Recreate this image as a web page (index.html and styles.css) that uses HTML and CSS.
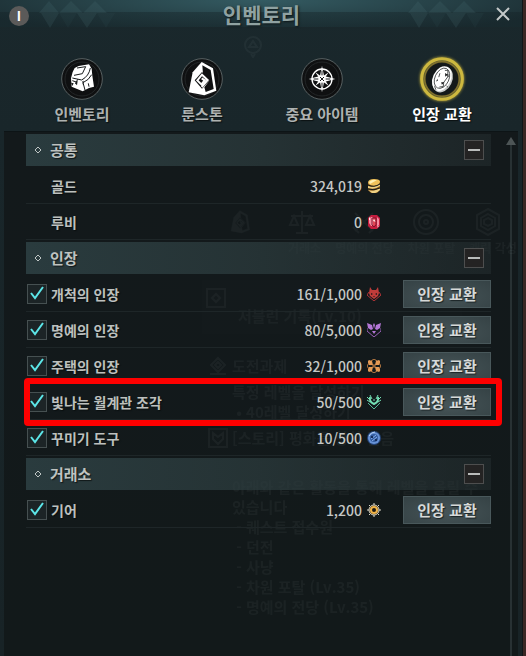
FILE: index.html
```html
<!DOCTYPE html>
<html lang="ko">
<head>
<meta charset="utf-8">
<meta name="viewport" content="width=device-width, initial-scale=1">
<title>인벤토리</title>
<link rel="stylesheet" href="styles.css">
</head>
<body>
<svg class="sprites" aria-hidden="true">
  <symbol id="check" viewBox="0 0 20 20"><path d="M4 9 L8 14 L16 3"/></symbol>
  <symbol id="rune" viewBox="0 0 126 126">
    <path fill="currentColor" d="M62 12 L96 31 L106 98 L70 112 L23 103 L35 43Z"/>
    <path fill="#101112" d="M64 22 L89 36 L98 93 L74 102 L70 88 L85 68 L66 48Z"/>
    <path fill="#101112" d="M63 42 L87 66 L63 92 L41 67Z"/>
    <path fill="none" stroke="currentColor" stroke-width="6" d="M62 87 L80 66 L63 50 L49 67 L61 79 L71 67 L62 61"/>
  </symbol>
</svg>

<div class="window">
  <div class="behind" aria-hidden="true">
    <svg class="ghost-pin" viewBox="0 0 20 22"><circle cx="10" cy="9" r="8"/><path d="M6 11l4-6 4 6zM8 18l2 3 2-3"/></svg>
    <div class="ghost-icons">
      <svg viewBox="0 0 126 126"><use href="#rune"/></svg>
      <svg viewBox="0 0 28 28"><path d="M14 3v22M8 25h12M3 8h22M6 8l-4 9h8zM22 8l-4 9h8z"/></svg>
      <svg viewBox="0 0 28 28"><path d="M5 5l18 18M23 5L5 23M3 19l6 6M19 25l6-6"/></svg>
      <svg viewBox="0 0 28 28"><circle cx="14" cy="14" r="12"/><circle cx="14" cy="14" r="7"/><circle cx="14" cy="14" r="2"/></svg>
      <svg viewBox="0 0 28 28"><path d="M14 1l11 6v14l-11 6-11-6V7zM14 6l7 4v8l-7 4-7-4v-8zM14 10l4 2v4l-4 2-4-2v-4z"/></svg>
    </div>
    <p class="ghost-caption"><span>거래소</span><span>명예의 전당</span><span>차원 포탈</span><span>캐릭 각성</span></p>
    <div class="ghost-card"><svg viewBox="0 0 20 20"><path d="M1 1h18v18H1zM10 6l4 4-4 4-4-4z"/></svg><p>저블린 기록(Lv.10)</p></div>
    <p class="ghost-head"><svg viewBox="0 0 20 20"><path d="M10 2l7 7-7 7-7-7zM2 18h16M10 6l3 3-3 3-3-3z"/></svg>도전과제</p>
    <p class="ghost-line">특정 레벨을 달성하기<br>&nbsp;• 40레벨 달성하기</p>
    <p class="ghost-head ghost-story"><svg viewBox="0 0 20 20"><path d="M1 1h18v18H1zM5 5l5 4 5-4v6l-5 5-5-5z"/></svg>[스토리] 평화를 향한 걸음</p>
    <p class="ghost-line ghost-text">아래와 같은 활동을 통해 레벨을 올릴 수<br>있습니다<br>&nbsp;- 퀘스트 접수원<br>&nbsp;- 던전<br>&nbsp;- 사냥<br>&nbsp;- 차원 포탈 (Lv.35)<br>&nbsp;- 명예의 전당 (Lv.35)</p>
  </div>

  <header class="titlebar">
    <span class="key">I</span>
    <svg class="facets" viewBox="0 0 76 27" aria-hidden="true"><path d="M0 12L10 0 20 12zM20 12L32 0 44 12zM44 12L56 0 68 12z"/><path d="M2 12h18l-9 15zM38 12h20l-10 15z"/><path class="dim" d="M20 12h18l-9 15zM58 12h18l-9 15z"/></svg>
    <h1>인벤토리</h1>
    <svg class="facets" viewBox="0 0 76 27" aria-hidden="true"><path d="M0 12L10 0 20 12zM20 12L32 0 44 12zM44 12L56 0 68 12z"/><path d="M2 12h18l-9 15zM38 12h20l-10 15z"/><path class="dim" d="M20 12h18l-9 15zM58 12h18l-9 15z"/></svg>
    <button class="close" type="button" aria-label="닫기"><svg viewBox="0 0 14 14"><path d="M1 1l12 12M13 1L1 13"/></svg></button>
  </header>

  <nav class="tabs">
    <button class="tab" type="button">
      <svg class="medal" viewBox="0 0 126 126">
        <circle class="disc" cx="63" cy="63" r="61"/><circle class="inner" cx="63" cy="63" r="51"/>
        <path fill="#fff" d="M41 30 L53 24 L84 19 L92 32 L94 53 L99 86 L84 90 L65 100 L32 86 L30 61 L35 42Z"/>
        <path class="ink thin" d="M48 30 L74 26 L64 47 L39 52 M88 30 Q84 54 62 66 L34 60 M92 50 Q84 66 66 74 L72 96 M50 64 L44 76 M34 68 L46 72 M82 76 L84 86"/>
        <path fill="#16191a" d="M30 74l8 2-4 8zM42 76l8-8-2 14zM64 70l4-2-2 14z"/>
      </svg>
      <span>인벤토리</span>
    </button>
    <button class="tab" type="button">
      <svg class="medal" viewBox="0 0 126 126">
        <circle class="disc" cx="63" cy="63" r="61"/><circle class="inner" cx="63" cy="63" r="51"/>
        <use href="#rune" width="126" height="126"/>
      </svg>
      <span>룬스톤</span>
    </button>
    <button class="tab" type="button">
      <svg class="medal" viewBox="0 0 126 126">
        <circle class="disc" cx="63" cy="63" r="61"/><circle class="inner" cx="63" cy="63" r="51"/>
        <circle cx="63" cy="63" r="30" fill="none" stroke="#fff" stroke-width="4"/>
        <path fill="#fff" d="M63 23l6 31 34 9-34 9-6 31-6-31-34-9 34-9z"/>
        <path fill="#fff" d="M43 43l16 11 8 0 16-11-11 16 0 8 11 16-16-11-8 0-16 11 11-16 0-8z"/>
        <path class="ink thin" d="M63 38v14M63 74v14M38 63h14M74 63h14M57 57l12 12M69 57L57 69"/>
      </svg>
      <span>중요 아이템</span>
    </button>
    <button class="tab active" type="button" aria-current="page">
      <svg class="medal" viewBox="0 0 126 126">
        <circle cx="63" cy="63" r="54" fill="#14191a"/>
        <circle class="gold" cx="63" cy="63" r="61"/><circle class="gold-inner" cx="63" cy="63" r="52"/>
        <g transform="rotate(25 63 63)"><ellipse cx="66" cy="64" rx="28" ry="40" fill="#c9cccc"/><ellipse cx="62" cy="62" rx="27" ry="39" fill="#fff"/><ellipse class="ink hair" cx="62" cy="61" rx="21" ry="32"/><path class="ink hair" d="M60 36l8-4 8 18-4 20 4 12-10 6M72 42l6 8M50 50l2 12M84 76l6 2M52 92l8 8"/><path fill="#17191a" d="M64 43l9 1-4 9zM50 68l4 5-4 4zM65 73l9-4-4 10z"/></g>
      </svg>
      <span>인장 교환</span>
    </button>
  </nav>

  <main class="body">
    <div class="list">
      <section>
        <div class="group"><svg class="bullet" viewBox="0 0 8 8"><path d="M4 1l3 3-3 3-3-3z"/></svg><h2>공통</h2><button class="fold" type="button" aria-label="공통 접기"></button></div>
        <ul>
          <li class="row"><span class="name">골드</span><span class="amount">324,019</span>
            <svg class="coin" viewBox="0 0 14 14"><path fill="#8b5a19" d="M1 4l12-2v9l-3 3H4l-3-3z"/><path fill="#f0c25b" d="M1 3Q2 0 7 0t6 2q0 4-6 5Q1 6 1 3z"/><path fill="#fff0b2" d="M5 1h5L3 5 2 3z"/><path fill="#eed083" d="M1 7q6 2 12-2v2q-5 4-12 2zM1 11q6 2 12-2v2q-4 4-8 3z"/><path stroke="#11191b" fill="none" d="M1 6q6 3 12-1M1 10q6 2 12-1"/></svg><span></span></li>
          <li class="row"><span class="name">루비</span><span class="amount">0</span>
            <svg class="coin" viewBox="0 0 14 14"><path fill="#c51c3e" d="M4 0h6l3 3v8l-3 3H4l-3-3V3z"/><path fill="#f58ca1" d="M4 2h2v9H4L2 8V4zM10 2l2 2v6l-2 2z"/><path fill="#e44456" d="M6 3h3v7l-3 1z"/><path fill="#ffe3e4" d="M7 4l2 3-3-1zM2 3l1-1v3H2zM11 11h1l-2 2z"/><path fill="none" stroke="#7e142d" d="M5 3h4v7l-2 2-2-2z"/></svg><span></span></li>
        </ul>
      </section>
      <section>
        <div class="group"><svg class="bullet" viewBox="0 0 8 8"><path d="M4 1l3 3-3 3-3-3z"/></svg><h2>인장</h2><button class="fold" type="button" aria-label="인장 접기"></button></div>
        <ul>
          <li class="row"><label class="name"><input type="checkbox" checked><svg class="tick"><use href="#check"/></svg>개척의 인장</label><span class="amount">161/1,000</span>
            <svg class="coin" viewBox="0 0 14 14"><path fill="#c13c3a" d="M3 0l2 3h4l2-3 1 6-1 3-4 3-4-3-1-3z"/><path fill="none" stroke="#b03436" d="M2 5L0 8l7 6 7-6-2-3"/><path fill="#231719" d="M4 6l2 1-2 1zM10 6L8 7l2 1zM6 9h2l-1 1z"/></svg><button class="trade" type="button">인장 교환</button></li>
          <li class="row"><label class="name"><input type="checkbox" checked><svg class="tick"><use href="#check"/></svg>명예의 인장</label><span class="amount">80/5,000</span>
            <svg class="coin" viewBox="0 0 14 14"><path fill="#b477d6" d="M0 0l5 2 1 4-2 1-3-2zM14 0L9 2 8 6l2 1 3-2zM6 2l1-2 1 2-1 4zM5 8h4l-2 3z"/><path fill="none" stroke="#9960b9" d="M0 5v3l7 6 7-6V5"/></svg><button class="trade" type="button">인장 교환</button></li>
          <li class="row"><label class="name"><input type="checkbox" checked><svg class="tick"><use href="#check"/></svg>주택의 인장</label><span class="amount">32/1,000</span>
            <svg class="coin" viewBox="0 0 14 14"><path fill="#e49a55" d="M1 2l1-1 3 1 1 4-4 0-1-2zM13 2l-1-1-3 1-1 4 4 0 1-2zM1 12l1 1 3-1 1-4-4 0-1 2zM13 12l-1 1-3-1-1-4 4 0 1 2z"/><path fill="none" stroke="#c07f45" d="M4 2l3-2 3 2M12 4l2 3-2 3M10 12l-3 2-3-2M2 10L0 7l2-3M5 7h4M7 5v4"/></svg><button class="trade" type="button">인장 교환</button></li>
          <li class="row marked"><label class="name"><input type="checkbox" checked><svg class="tick"><use href="#check"/></svg>빛나는 월계관 조각</label><span class="amount">50/500</span>
            <svg class="coin" viewBox="0 0 14 14"><path fill="none" stroke="#73dfb4" stroke-width="2" d="M3 2q-1 5 4 7 5-2 4-7"/><path fill="none" stroke="#73dfb4" d="M0 2l3 3M0 5l3 2M3 0l2 4M14 2l-3 3M14 5l-3 2M11 0L9 4M7 4v2"/><path fill="none" stroke="#56b596" d="M1 8l6 6 6-6"/></svg><button class="trade" type="button">인장 교환</button></li>
          <li class="row"><label class="name"><input type="checkbox" checked><svg class="tick"><use href="#check"/></svg>꾸미기 도구</label><span class="amount">10/500</span>
            <svg class="coin" viewBox="0 0 14 14"><circle cx="7" cy="7" r="7" fill="#254579"/><circle cx="7" cy="7" r="6" fill="#6792d6"/><circle cx="7" cy="7" r="4" fill="#335c9e"/><path fill="none" stroke="#b4d0f4" d="M2 5q2-4 6-4"/><path fill="none" stroke="#84aceb" d="M4 8l5-4M5 10l5-4"/><path fill="#17305d" d="M4 5h2v2H4zM8 8h2v2H8z"/></svg><span></span></li>
        </ul>
      </section>
      <section>
        <div class="group"><svg class="bullet" viewBox="0 0 8 8"><path d="M4 1l3 3-3 3-3-3z"/></svg><h2>거래소</h2><button class="fold" type="button" aria-label="거래소 접기"></button></div>
        <ul>
          <li class="row"><label class="name"><input type="checkbox" checked><svg class="tick"><use href="#check"/></svg>기어</label><span class="amount">1,200</span>
            <svg class="coin" viewBox="0 0 14 14"><path stroke="#ddd9ca" d="M7 0v14M0 7h14M2 2l10 10M12 2L2 12"/><circle cx="7" cy="7" r="5" fill="#32291b" stroke="#ddd7c2"/><circle cx="7" cy="7" r="3" fill="#1d1a14" stroke="#efb348" stroke-width="2"/></svg><button class="trade" type="button">인장 교환</button></li>
        </ul>
      </section>
    </div>
    <div class="scroll" aria-hidden="true"></div>
  </main>
</div>
</body>
</html>
```

FILE: styles.css
```css
* { box-sizing: border-box; }

body {
  margin: 0;
  background: #3a2724;
  color: #bdc0be;
  font-family: "Noto Sans CJK KR", sans-serif;
  font-size: 14px;
  line-height: 20px;
  font-weight: 500;
}

h1, h2, p, ul { margin: 0; padding: 0; }
ul { list-style: none; }
button { font: inherit; color: inherit; border: 0; padding: 0; background: none; cursor: pointer; }
svg { display: block; }
.sprites { position: absolute; width: 0; height: 0; }

.window {
  position: relative;
  display: flex;
  flex-direction: column;
  min-height: 100vh;
  margin-right: 3px;
  padding: 0 4px;
  background: linear-gradient(#1a282c, #19262a 130px, #182326);
  border-right: 1px solid #101719;
}

/* Title bar */
.titlebar {
  display: grid;
  grid-template-columns: 30px 76px 1fr 76px 30px;
  align-items: center;
  height: 27px;
  margin: 0 -4px;
  padding: 0 8px 0 9px;
  background:
    linear-gradient(transparent 12px, rgba(20, 34, 38, .4) 12px),
    radial-gradient(ellipse 60% 130% at 50% 0, #345b62, #1c2e33);
}
.titlebar h1 {
  font-size: 21px;
  line-height: 28px;
  font-weight: 700;
  text-align: center;
  color: #8fa2a2;
  text-shadow: 1px 1px 2px #0c1517;
}
.key {
  width: 20px;
  height: 20px;
  margin-top: 3px;
  border-radius: 50%;
  background: #5b5a59;
  color: #fff;
  font-size: 13px;
  font-weight: 700;
  text-align: center;
}
.facets { width: 76px; height: 27px; fill: #5a8489; opacity: .14; }
.facets .dim { opacity: .4; }
.close { justify-self: end; margin-right: 4px; width: 14px; height: 14px; }
.close svg { width: 14px; height: 14px; fill: none; stroke: #c3c8c8; stroke-width: 2; }

/* Tabs */
.tabs {
  display: grid;
  grid-template-columns: repeat(4, 1fr);
  height: 104px;
  padding: 31px 16px 0 18px;
}
.tab {
  display: flex;
  flex-direction: column;
  align-items: center;
  gap: 3px;
  height: 68px;
  font-size: 15px;
  line-height: 22px;
  font-weight: 700;
  color: #aeb2b1;
  text-shadow: 1px 1px 1px #0b1112;
}
.tab.active { color: #fff; }
.medal { width: 42px; height: 42px; overflow: visible; color: #fff; }
.disc { fill: #0f1011; stroke: #586061; stroke-width: 3; }
.inner { fill: none; stroke: #232627; stroke-width: 3; }
.ink { fill: none; stroke: #16191a; stroke-width: 4; }
.ink.thin { stroke-width: 3; }
.ink.hair { stroke-width: 2; }
.gold { fill: none; stroke: #cdb83f; stroke-width: 9; filter: drop-shadow(0 0 5px #cdb83f); }
.gold-inner { fill: none; stroke: #80712e; stroke-width: 5; }

/* Currency list */
.body {
  flex: 1;
  display: flex;
  padding-left: 22px;
  background: rgba(17, 22, 24, .8);
  border-top: 1px solid #0d1416;
}
.list { flex: 1; position: relative; z-index: 2; }
.group {
  display: flex;
  align-items: center;
  height: 32px;
  margin: 2px 0;
  padding: 0 7px 0 8px;
  background: linear-gradient(90deg, rgba(43, 61, 64, .95), rgba(45, 61, 63, .7) 50%, rgba(38, 48, 50, .5));
}
.bullet { width: 8px; height: 8px; margin-right: 8px; fill: none; stroke: #bfc6c5; }
.group h2 {
  flex: 1;
  font-size: 15px;
  font-weight: 700;
  line-height: 20px;
  color: #bec2c0;
  text-shadow: 1px 1px 1px #101718;
}
.fold {
  display: grid;
  place-items: center;
  width: 20px;
  height: 20px;
  background: #242323;
  border: 1px solid #4d4e4e;
}
.fold::before { content: ""; width: 12px; height: 2px; background: #b9bbba; }

.row {
  position: relative;
  display: grid;
  grid-template-columns: 1fr auto 14px 110px;
  align-items: center;
  height: 36px;
  border-bottom: 1px solid #1e2628;
}
.name {
  display: grid;
  grid-template-columns: 20px auto;
  column-gap: 4px;
  align-items: center;
  justify-content: start;
  padding-left: 1px;
  font-weight: 700;
  text-shadow: 1px 1px 1px #0a0f10;
}
span.name::before { content: ""; }
.name input {
  grid-area: 1 / 1;
  appearance: none;
  width: 20px;
  height: 20px;
  margin: 0;
  background: #1c2426;
  border: 1px solid #465051;
}
.tick { grid-area: 1 / 1; width: 20px; height: 20px; fill: none; stroke: #5ce6e8; stroke-width: 2; pointer-events: none; }
.name input:not(:checked) + .tick { visibility: hidden; }
.amount { padding-right: 5px; color: #c5c7c5; }
.coin { width: 14px; height: 14px; }
.row > :last-child { margin-left: 22px; }
.trade {
  height: 28px;
  background: radial-gradient(ellipse at 50% 60%, #465457, #354245);
  border: 1px solid #49585b;
  font-size: 15px;
  line-height: 24px;
  font-weight: 700;
  color: #d6d9d8;
  text-shadow: 1px 1px 1px #1b2426;
}
.marked::after {
  content: "";
  position: absolute;
  inset: -6px -11px -7px -2px;
  border: 6px solid #fe0000;
  border-radius: 4px;
  pointer-events: none;
}

.scroll { display: flex; flex-direction: column; align-items: center; width: 14px; margin: 5px 0 0 13px; }
.scroll::before { content: ""; border: 5px solid transparent; border-top: 0; border-bottom: 8px solid #4d5556; }
.scroll::after { content: ""; flex: 1; width: 2px; background: #283133; }

/* Quest journal showing faintly through the window */
.behind {
  position: absolute;
  inset: 36px 0 0 200px;
  z-index: 1;
  overflow: hidden;
  pointer-events: none;
  color: #a5b5b5;
  opacity: .06;
  font-size: 15px;
  font-weight: 700;
}
.behind svg { fill: none; stroke: currentColor; stroke-width: 2; }
.ghost-pin { width: 20px; height: 22px; margin-left: 43px; }
.ghost-icons { display: flex; gap: 34px; margin: 150px 0 0 26px; }
.ghost-icons svg { width: 28px; height: 28px; }
.ghost-caption { display: flex; gap: 14px; margin: 2px 0 0 88px; font-size: 12px; white-space: nowrap; }
.ghost-card { display: flex; gap: 12px; height: 54px; margin: 22px 60px 0 2px; padding: 8px 4px; background: rgba(160, 180, 180, .2); }
.ghost-card svg, .ghost-head svg { width: 20px; height: 20px; }
.ghost-card p { padding-top: 18px; }
.ghost-head { display: flex; gap: 4px; margin: 22px 0 6px 8px; }
.ghost-line { margin-left: 32px; }
.ghost-head.ghost-story { margin-top: 6px; }
.ghost-text { margin-top: 29px; white-space: nowrap; }
```
